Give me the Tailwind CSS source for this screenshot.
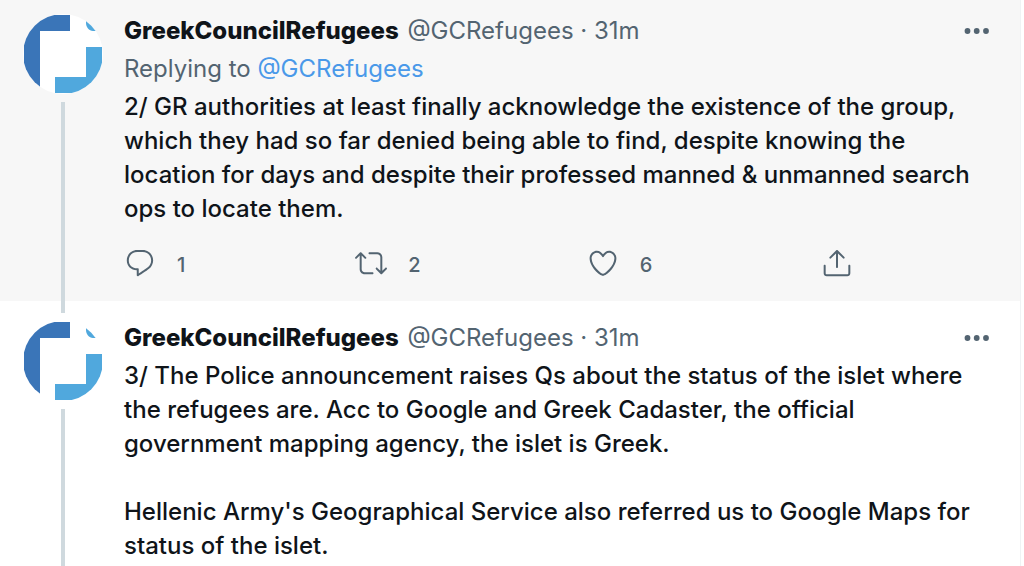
<!DOCTYPE html>
<html lang="en">
<head>
    <meta charset="UTF-8">
    <meta name="viewport" content="width=device-width, initial-scale=1.0">
    <title>GreekCouncilRefugees thread</title>
    <script src="https://cdn.jsdelivr.net/npm/@tailwindcss/browser@4"></script>
</head>
<body class="h-screen overflow-hidden bg-white font-['Inter',sans-serif] text-2xl leading-[34px] text-[#0f1419]">
    <!-- shared shapes -->
    <svg class="hidden" xmlns="http://www.w3.org/2000/svg">
        <symbol id="logo" viewBox="0 0 80 80">
            <rect width="80" height="80" fill="#fff"/>
            <path fill="#3a75b8" d="M1 1h46v16H17v63H1z"/>
            <path fill="#50a8dd" d="M63 33h16v46H32V63h31zM63 5v4c0 4 3 8 7 8h6V5z"/>
        </symbol>
        <symbol id="more" viewBox="0 0 26 8">
            <circle cx="3.5" cy="4" r="2.9"/><circle cx="12.7" cy="4" r="2.9"/><circle cx="22" cy="4" r="2.9"/>
        </symbol>
    </svg>

    <main class="mr-[3px] min-h-screen border-r border-[#eff3f4]">
        <!-- tweet 2/ -->
        <article class="flex gap-[21px] bg-[#f7f7f7] pl-[23px] pr-[30px]">
            <div class="flex w-20 shrink-0 flex-col items-center gap-2 pt-[14px]">
                <svg class="size-20 rounded-full" role="img" aria-label="GreekCouncilRefugees"><use href="#logo"/></svg>
                <div class="w-1 grow bg-[#cfd9de]"></div>
            </div>
            <div class="min-w-0 grow pt-[14px] pb-[22px]">
                <header class="flex items-center justify-between">
                    <div class="text-[#536471]"><a href="#" class="mr-[2px] font-extrabold text-[#0f1419]">GreekCouncilRefugees</a> <a href="#">@GCRefugees</a> · <a href="#">31m</a></div>
                    <button type="button" aria-label="More" class="text-[#536471]"><svg class="h-2 w-[26px] fill-current"><use href="#more"/></svg></button>
                </header>
                <p class="mt-1 text-[#536471]">Replying to <a href="#" class="text-[#4a99e9]">@GCRefugees</a></p>
                <p class="mt-1 pr-4 font-medium">2/ GR authorities at least finally acknowledge the existence of the group, which they had so far denied being able to find, despite knowing the location for days and despite their professed manned &amp; unmanned search ops to locate them.</p>
                <div class="mt-[21px] mr-[137px] grid grid-cols-[1fr_1fr_1fr_35px] text-xl leading-7 font-medium text-[#536471]">
                    <button type="button" aria-label="Reply" class="flex items-end gap-[21px]">
                        <svg class="size-8 fill-current" viewBox="0 0 24 24"><path d="M14.046 2.242l-4.148-.01h-.002c-4.374 0-7.8 3.427-7.8 7.802 0 4.098 3.186 7.206 7.465 7.37v3.828c0 .108.044.286.12.403.142.225.384.347.632.347.138 0 .277-.038.402-.118.264-.168 6.473-4.14 8.088-5.506 1.902-1.61 3.04-3.97 3.043-6.312v-.017c-.006-4.367-3.43-7.787-7.8-7.788zm3.787 12.972c-1.134.96-4.862 3.405-6.772 4.643V16.67c0-.414-.335-.75-.75-.75h-.396c-3.66 0-6.318-2.476-6.318-5.886 0-3.534 2.768-6.302 6.3-6.302l4.147.01h.002c3.532 0 6.3 2.766 6.302 6.296-.003 1.91-.942 3.844-2.514 5.176z"/></svg>
                        <span>1</span>
                    </button>
                    <button type="button" aria-label="Retweet" class="flex items-end gap-[21px]">
                        <svg class="size-8 fill-current" viewBox="0 0 24 24"><path d="M23.77 15.67c-.292-.293-.767-.293-1.06 0l-2.22 2.22V7.65c0-2.068-1.683-3.75-3.75-3.75h-5.85c-.414 0-.75.336-.75.75s.336.75.75.75h5.85c1.24 0 2.25 1.01 2.25 2.25v10.24l-2.22-2.22c-.293-.293-.768-.293-1.06 0s-.294.768 0 1.06l3.5 3.5c.145.147.337.22.53.22s.383-.072.53-.22l3.5-3.5c.294-.292.294-.767 0-1.06zm-10.66 3.28H7.26c-1.24 0-2.25-1.01-2.25-2.25V6.46l2.22 2.22c.148.147.34.22.532.22s.384-.073.53-.22c.293-.293.293-.768 0-1.06l-3.5-3.5c-.293-.294-.768-.294-1.06 0l-3.5 3.5c-.294.292-.294.767 0 1.06s.767.293 1.06 0l2.22-2.22V16.7c0 2.068 1.683 3.75 3.75 3.75h5.85c.414 0 .75-.336.75-.75s-.337-.75-.75-.75z"/></svg>
                        <span>2</span>
                    </button>
                    <button type="button" aria-label="Like" class="flex items-end gap-[21px]">
                        <svg class="size-8 fill-current" viewBox="0 0 24 24"><path d="M12 21.638h-.014C9.403 21.59 1.95 14.856 1.95 8.478c0-3.064 2.525-5.754 5.403-5.754 2.29 0 3.83 1.58 4.646 2.73.814-1.148 2.354-2.73 4.645-2.73 2.88 0 5.404 2.69 5.404 5.755 0 6.376-7.454 13.11-10.037 13.157H12zM7.354 4.225c-2.08 0-3.903 1.988-3.903 4.255 0 5.74 7.034 11.596 8.55 11.658 1.518-.062 8.55-5.917 8.55-11.658 0-2.267-1.823-4.255-3.903-4.255-2.528 0-3.94 2.936-3.952 2.965-.23.562-1.156.562-1.387 0-.014-.03-1.425-2.965-3.954-2.965z"/></svg>
                        <span>6</span>
                    </button>
                    <button type="button" aria-label="Share" class="justify-self-end">
                        <svg class="size-8 fill-current" viewBox="0 0 24 24"><path d="M17.53 7.47l-5-5c-.293-.293-.768-.293-1.06 0l-5 5c-.294.293-.294.768 0 1.06s.767.294 1.06 0l3.72-3.72V15c0 .414.336.75.75.75s.75-.336.75-.75V4.81l3.72 3.72c.146.147.338.22.53.22s.384-.072.53-.22c.293-.293.293-.767 0-1.06z"/><path d="M19.708 21.944H4.292C3.028 21.944 2 20.916 2 19.652V14c0-.414.336-.75.75-.75s.75.336.75.75v5.652c0 .437.355.792.792.792h15.416c.437 0 .792-.355.792-.792V14c0-.414.336-.75.75-.75s.75.336.75.75v5.652c0 1.264-1.028 2.292-2.292 2.292z"/></svg>
                    </button>
                </div>
            </div>
        </article>

        <!-- tweet 3/ -->
        <article class="flex gap-[21px] pl-[23px] pr-[30px]">
            <div class="flex w-20 shrink-0 flex-col items-center gap-2">
                <div class="h-3 w-1 bg-[#cfd9de]"></div>
                <svg class="size-20 rounded-full" role="img" aria-label="GreekCouncilRefugees"><use href="#logo"/></svg>
                <div class="w-1 grow bg-[#cfd9de]"></div>
            </div>
            <div class="min-w-0 grow pt-5 pb-[22px]">
                <header class="flex items-center justify-between">
                    <div class="text-[#536471]"><a href="#" class="mr-[2px] font-extrabold text-[#0f1419]">GreekCouncilRefugees</a> <a href="#">@GCRefugees</a> · <a href="#">31m</a></div>
                    <button type="button" aria-label="More" class="text-[#536471]"><svg class="h-2 w-[26px] fill-current"><use href="#more"/></svg></button>
                </header>
                <p class="mt-1 pr-4 font-medium">3/ The Police announcement raises Qs about the status of the islet where the refugees are. Acc to Google and Greek Cadaster, the official government mapping agency, the islet is Greek.</p>
                <p class="mt-[34px] pr-4 font-medium">Hellenic Army's Geographical Service also referred us to Google Maps for status of the islet.</p>
            </div>
        </article>
    </main>
</body>
</html>
